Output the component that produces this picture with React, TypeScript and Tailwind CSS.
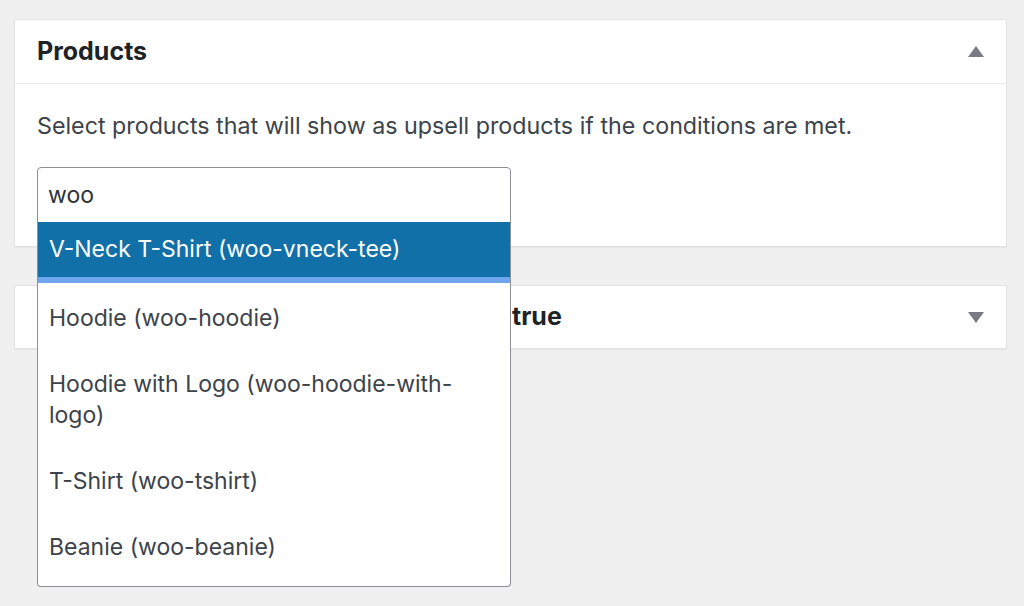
import React from 'react';

const options = [
  'Hoodie (woo-hoodie)',
  'Hoodie with Logo (woo-hoodie-with-logo)',
  'T-Shirt (woo-tshirt)',
  'Beanie (woo-beanie)',
];

function Caret({ up }: { up?: boolean }) {
  return (
    <svg width="16" height="11" viewBox="0 0 16 11" className="mr-[22px]">
      {up ? <polygon points="8,0 16,11 0,11" fill="#787c82" /> : <polygon points="0,0 16,0 8,11" fill="#787c82" />}
    </svg>
  );
}

export default function App() {
  return (
    <div className="min-h-[606px] bg-[#f0f0f1] pt-[19px] pl-[14px] font-['Inter','Liberation_Sans',sans-serif]">
      <div className="w-[993px] border border-[#e2e3e5] bg-white shadow-[0_1px_1px_rgba(0,0,0,0.04)]">
        <div className="flex h-[64px] items-center justify-between border-b border-[#e8e9ea] pl-[22px]">
          <h2 className="text-[25px] font-bold text-[#1d2327]">Products</h2>
          <Caret up />
        </div>
        <div className="px-[22px] pt-[26px] pb-[23px]">
          <p className="text-[23.25px] leading-[32px] text-[#3c434a]">
            Select products that will show as upsell products if the conditions are met.
          </p>
          <div className="relative mt-[25px] w-[474px]">
            <div className="flex h-[56px] items-center rounded-t-[4px] border border-[#8c8f94] pl-[10px] text-[23px] text-[#2c3338]">
              woo
            </div>
            <ul className="absolute left-0 top-[55px] z-10 w-full rounded-b-[4px] border-x border-b border-[#8c8f94] bg-white pb-[7px] text-[23px] leading-[31px] text-[#3c434a]">
              <li className="mb-[1px] flex h-[61px] items-center border-b-[6px] border-[#6fa6ee] bg-[#1170a8] px-[11px] text-white">
                V-Neck T-Shirt (woo-vneck-tee)
              </li>
              {options.map((o) => (
                <li key={o} className="pl-[11px] pr-[40px] pt-[19px] pb-[16px]">
                  {o}
                </li>
              ))}
            </ul>
          </div>
        </div>
      </div>
      <div className="mt-[38px] flex h-[64px] w-[993px] items-center justify-between border border-[#e2e3e5] bg-white pl-[497px] shadow-[0_1px_1px_rgba(0,0,0,0.04)]">
        <h2 className="text-[25px] font-bold text-[#1d2327]">true</h2>
        <Caret />
      </div>
    </div>
  );
}
